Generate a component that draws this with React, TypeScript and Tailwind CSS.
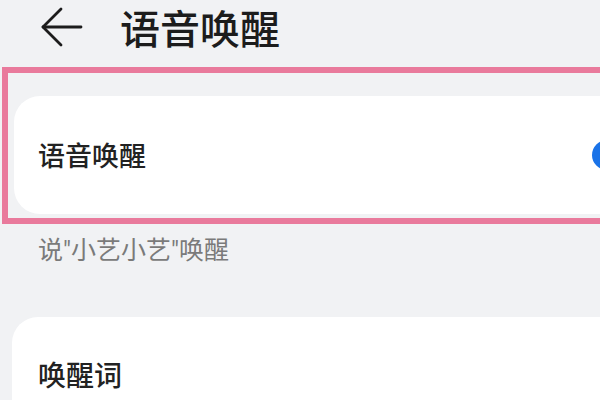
export default function App() {
  const font = { fontFamily: '"Noto Sans CJK SC", "Noto Sans", sans-serif' };
  return (
    <div className="w-[600px] h-[400px] overflow-hidden bg-[#f1f2f4]" style={font}>
      <div className="flex items-center h-[54px] pl-[40px]">
        <svg width="44" height="40" viewBox="0 0 44 40" fill="none" stroke="#1c1c1c" strokeWidth="2.8" strokeLinecap="round" strokeLinejoin="round">
          <path d="M3 20 H41" />
          <path d="M21 2 L3 20 L21 38" />
        </svg>
        <div className="ml-[36px] text-[40px] leading-[48px] font-medium text-[#1c1c1c]">语音唤醒</div>
      </div>
      <div className="mt-[13px] ml-[2px] w-[640px] border-[6px] border-[#e97a9c] pt-[23px] pl-[6px] pb-[4px]">
        <div className="bg-white rounded-l-[26px] h-[118px] flex items-center pl-[24px] relative">
          <span className="text-[27px] leading-[36px] font-medium text-[#222]">语音唤醒</span>
          <div className="absolute left-[578px] top-[44px] w-[60px] h-[30px] rounded-full bg-[#1a73e8]" />
        </div>
      </div>
      <div
        className="mt-[11px] pl-[38px] text-[25px] leading-[32px] text-[#7a7a7a]"
        style={{ fontFamily: 'Roboto, "Noto Sans CJK SC", sans-serif' }}
      >
        说"小艺小艺"唤醒
      </div>
      <div className="mt-[50px] ml-[12px] bg-white rounded-tl-[26px] h-[120px] pl-[26px] pt-[39px]">
        <span className="text-[28px] leading-[36px] font-medium text-[#222]">唤醒词</span>
      </div>
    </div>
  );
}
